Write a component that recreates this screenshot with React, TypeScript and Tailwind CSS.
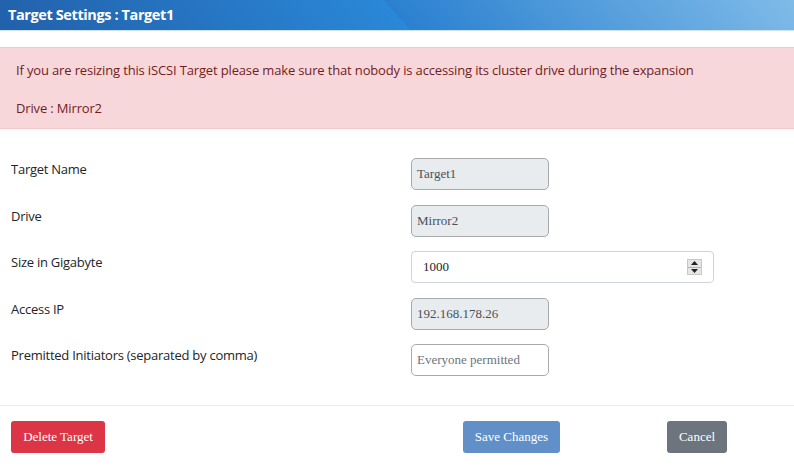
import React from 'react';

const sans = { fontFamily: '"Open Sans", "Noto Sans", sans-serif' };

const Field: React.FC<{ label: string; children: React.ReactNode }> = ({ label, children }) => (
  <div className="flex items-start h-[46.5px]">
    <label className="w-[400px] pt-[2px] text-[13px] text-[#212529] tracking-[-0.25px]" style={sans}>
      {label}
    </label>
    {children}
  </div>
);

const ReadOnly: React.FC<{ value: string }> = ({ value }) => (
  <div className="w-[138px] h-[32px] rounded-[5px] border border-[#a9a9a9] bg-[#e9ecef] px-[5px] flex items-center text-[13px] text-[#495057] font-['Liberation_Serif',serif]">
    {value}
  </div>
);

const App: React.FC = () => {
  return (
    <div className="w-[794px] h-[466px] bg-white overflow-hidden">
      <div className="h-[31px] flex items-center px-[8px] border-b border-[#cfe3f5] bg-[linear-gradient(48deg,#2260aa_0%,#2a88d8_50%,#2a80d0_50%,#7fbbe8_100%)]">
        <h1 className="text-white text-[14.5px] font-bold tracking-[-0.4px]" style={sans}>
          Target Settings : Target1
        </h1>
      </div>

      <div className="mt-[16px] h-[82px] bg-[#f8d7da] border-y border-[#f5c6cb] px-[16px] pt-[13px] text-[13px] text-[#721c24] tracking-[-0.15px]" style={sans}>
        <p>If you are resizing this iSCSI Target please make sure that nobody is accessing its cluster drive during the expansion</p>
        <p className="mt-[18px]">Drive : Mirror2</p>
      </div>

      <div className="pl-[11px] pt-[29px] h-[277px] border-b border-[#e9ecef]">
        <Field label="Target Name">
          <ReadOnly value="Target1" />
        </Field>
        <Field label="Drive">
          <ReadOnly value="Mirror2" />
        </Field>
        <Field label="Size in Gigabyte">
          <div className="w-[303px] h-[32px] rounded-[4px] border border-[#ced4da] bg-white pl-[11px] pr-[11px] flex items-center justify-between text-[13px] text-[#212529] font-['Liberation_Serif',serif]">
            <span>1000</span>
            <div className="w-[15px] h-[16px] bg-[#e6e6e6] border border-[#c8c8c8] flex flex-col">
              <div className="flex-1 flex items-center justify-center border-b border-[#b0b0b0]">
                <svg width="7" height="4" viewBox="0 0 7 4"><path d="M3.5 0L7 4H0z" fill="#222" /></svg>
              </div>
              <div className="flex-1 flex items-center justify-center">
                <svg width="7" height="4" viewBox="0 0 7 4"><path d="M0 0H7L3.5 4z" fill="#222" /></svg>
              </div>
            </div>
          </div>
        </Field>
        <Field label="Access IP">
          <ReadOnly value="192.168.178.26" />
        </Field>
        <Field label="Premitted Initiators (separated by comma)">
          <div className="w-[138px] h-[32px] rounded-[5px] border border-[#a9a9a9] bg-white px-[5px] flex items-center text-[13px] text-[#6c757d] font-['Liberation_Serif',serif]">
            Everyone permitted
          </div>
        </Field>
      </div>

      <div className="flex items-center pt-[15px] pl-[11px] font-['Liberation_Serif',serif] text-[13px] text-white">
        <button className="w-[94px] h-[32px] rounded-[3px] bg-[#dc3545]">Delete Target</button>
        <button className="ml-[358px] w-[97px] h-[32px] rounded-[3px] bg-[#6190c9]">Save Changes</button>
        <button className="ml-[107px] w-[60px] h-[32px] rounded-[3px] bg-[#6c757d]">Cancel</button>
      </div>
    </div>
  );
};

export default App;
